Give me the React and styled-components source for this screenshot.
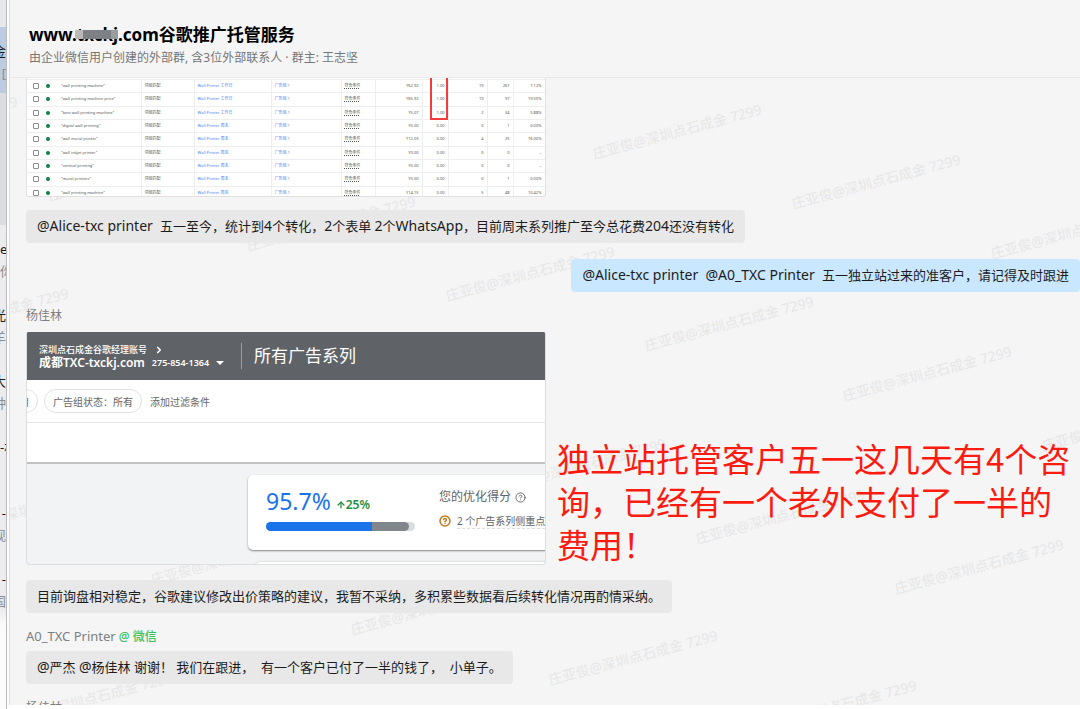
import React from 'react';
import styled, { createGlobalStyle } from 'styled-components';
import { ChevronRight, ArrowUp, CircleHelp } from 'lucide-react';

const Global = createGlobalStyle`
  * { box-sizing: border-box; }
  body {
    margin: 0;
    background: #fff;
    font-family: "Noto Sans", "Noto Sans CJK SC", sans-serif;
    color: #1a1a1a;
  }
  h1, h2, p { margin: 0; font-weight: 400; }
  button { font: inherit; color: inherit; background: none; border: 0; padding: 0; }
`;

const Screen = styled.div`
  display: flex;
  height: 100vh;
  overflow: hidden;
`;

const ChatList = styled.aside`
  flex: 0 0 7px;
  overflow: hidden;
  padding-top: 27px;
  border-right: 1px solid #b9bbbf;
  background: linear-gradient(#e6e8ec 0 166px, #ececee 166px 610px, #fbfbfb 625px);
`;

const ChatItem = styled.div`
  height: 66px;
  padding-top: 13px;
  display: flex;
  flex-direction: column;
  align-items: ${(p) => (p.$start ? 'flex-start' : 'flex-end')};
  white-space: nowrap;
  font-size: 13px;
  line-height: 22px;
  background: ${(p) => (p.$tone === 'active' ? '#bccbe0' : p.$tone === 'hover' ? '#dbdde1' : 'transparent')};
`;

const ItemPreview = styled.span`
  color: #8a8d92;
`;

const Panel = styled.main`
  position: relative;
  flex: 1;
  min-width: 0;
  display: flex;
  flex-direction: column;
  margin: 0 0 4px 2px;
  border-left: 1px solid #dcdde1;
  background: #f5f5f5;
  overflow: hidden;
`;

const Header = styled.header`
  position: relative;
  flex: none;
  height: 78px;
  padding: 22px 19px 0;
  border-bottom: 1px solid #e8e8e8;
  background: #f5f5f5;
`;

const Title = styled.h1`
  display: flex;
  font-size: 17px;
  line-height: 26px;
  font-weight: 700;
  color: #000;
`;

const Redacted = styled.span`
  position: relative;
  &::after {
    content: "";
    position: absolute;
    inset: 8px 0 9px -2px;
    background: linear-gradient(90deg, #bdb8b5 0 8px, #7d8186 8px 36px, #9a9da0 36px);
  }
`;

const Subtitle = styled.p`
  font-size: 12px;
  line-height: 20px;
  color: #757575;
`;

const Stream = styled.section`
  position: relative;
  flex: 1;
  min-height: 0;
  overflow: hidden;
  padding-left: 16px;
  display: flex;
  flex-direction: column;
  align-items: flex-start;
  > * { flex-shrink: 0; }
`;

const WatermarkLayer = styled.div`
  position: absolute;
  inset: 0;
  overflow: hidden;
  pointer-events: none;
`;

const Watermark = styled.span`
  position: absolute;
  white-space: nowrap;
  font-size: 14px;
  line-height: 16px;
  color: #e6e6e7;
  transform: rotate(-15deg);
  transform-origin: left bottom;
`;

const Shot = styled.figure`
  position: relative;
  margin: 0;
  width: 520px;
  height: 119px;
  padding-top: 1px;
  background: #fff;
  overflow: hidden;
  border-radius: 0 0 3px 3px;
  border: 1px solid #e0e0e0;
  border-top: 0;
`;

const Keywords = styled.table`
  width: 100%;
  height: 121px;
  table-layout: fixed;
  border-collapse: collapse;
  font-size: 4px;
  line-height: 6px;
  color: #555;
  td {
    padding: 0 3px;
    border: 1px solid #eeeeee;
    border-left: 0;
    white-space: nowrap;
    overflow: hidden;
  }
  td:first-child { padding-left: 6px; }
  a { color: #4285f4; text-decoration: none; }
  u { text-decoration: underline dotted; }
`;

const Num = styled.td`
  text-align: right;
`;

const KeywordCell = styled.label`
  display: flex;
  align-items: center;
  gap: 7px;
  input {
    appearance: none;
    width: 6px;
    height: 6px;
    margin: 0;
    border: 1px solid #8a8a8a;
    border-radius: 1px;
  }
`;

const Dot = styled.i`
  width: 4px;
  height: 4px;
  margin-right: 4px;
  border-radius: 50%;
  background: #0b8043;
`;

const RedMark = styled.span`
  position: absolute;
  left: 403px;
  top: -3px;
  width: 18px;
  height: 45px;
  border: 2px solid #f23c3c;
`;

const Bubble = styled.p`
  position: relative;
  min-height: 33px;
  padding: 6px 11px;
  margin: ${(p) => p.$margin};
  align-self: ${(p) => (p.$own ? 'flex-end' : 'flex-start')};
  border-radius: 4px;
  font-size: 13px;
  line-height: 21px;
  white-space: pre;
  color: #1c1c1c;
  background: ${(p) => (p.$own ? '#c9e7ff' : '#e8e8e8')};
`;

const Latin = styled.span`
  font-size: 14px;
  line-height: 14px;
`;

const Sender = styled.p`
  position: relative;
  font-size: 12px;
  line-height: 20px;
  color: #7c7f82;
`;

const SenderLatin = styled.span`
  font-size: 13px;
  line-height: 14px;
`;

const WeChat = styled.span`
  margin-left: 3px;
  font-weight: 500;
  color: #3cc15f;
`;

const ShotRow = styled.div`
  position: relative;
  width: 100%;
  margin-top: 6px;
  display: flex;
  align-items: flex-start;
  gap: 11px;
`;

const AdsShot = styled.figure`
  flex: 0 0 520px;
  height: 233px;
  margin: 0;
  border: 1px solid #dcdee1;
  border-top: 0;
  border-radius: 2px 2px 4px 4px;
  overflow: hidden;
  background: #f1f3f4;
`;

const AdsBar = styled.div`
  height: 48px;
  display: flex;
  align-items: center;
  padding-left: 12px;
  color: #fff;
  background: #5f6368;
`;

const Account = styled.div`
  padding-right: 17px;
  border-right: 1px solid #9a9da1;
`;

const AccountLine = styled.div`
  display: flex;
  align-items: center;
  gap: 7px;
  font-size: ${(p) => (p.$main ? '12px' : '9px')};
  font-weight: ${(p) => (p.$main ? 600 : 500)};
  line-height: 13px;
  small { font-size: 9px; }
`;

const Caret = styled.i`
  border: 4px solid transparent;
  border-top-color: #fff;
  border-bottom: 0;
`;

const AdsTitle = styled.h2`
  padding-left: 12px;
  font-size: 17px;
  line-height: 24px;
`;

const Filters = styled.div`
  height: 43px;
  display: flex;
  align-items: center;
  gap: 6px;
  border-bottom: 1px solid #e3e4e6;
  background: #fff;
  font-size: 10px;
  color: #666;
`;

const Chip = styled.button`
  flex: none;
  height: 24px;
  padding: 0 8px;
  margin-left: ${(p) => (p.$cut ? '-17px' : '0')};
  border: 1px solid #dfe1e4;
  border-radius: 12px;
`;

const AddFilter = styled.button`
  margin-left: 2px;
`;

const Blank = styled.div`
  height: 41px;
  border-bottom: 2px solid #c0c2c4;
  background: #fff;
`;

const ScoreCard = styled.div`
  height: 75px;
  margin: 11px -20px 0 221px;
  padding: 10px 18px;
  display: grid;
  grid-template-columns: 149px 1fr;
  column-gap: 24px;
  border-radius: 5px;
  background: #fff;
  box-shadow: 0 1px 2px rgba(0, 0, 0, 0.45);
`;

const Score = styled.div`
  display: flex;
  align-items: baseline;
  gap: 5px;
  font-size: 23px;
  line-height: 32px;
  color: #1a73e8;
`;

const Gain = styled.span`
  display: flex;
  align-items: center;
  font-size: 12px;
  font-weight: 600;
  line-height: 12px;
  color: #1e8e3e;
`;

const Track = styled.div`
  height: 9px;
  margin-top: 5px;
  border-radius: 5px;
  overflow: hidden;
  background: #dadce0;
`;

const Fill = styled.div`
  height: 9px;
  width: ${(p) => p.$width};
  border-radius: 0 5px 5px 0;
  background: linear-gradient(90deg, #1a73e8 0 74%, #80868b 74%);
`;

const Info = styled.div`
  display: flex;
  align-items: center;
  gap: ${(p) => (p.$small ? '6px' : '4px')};
  min-height: 24px;
  white-space: nowrap;
  font-size: ${(p) => (p.$small ? '10px' : '12px')};
  line-height: 24px;
  color: #5f6368;
  svg { flex: none; }
`;

const Dotted = styled.span`
  line-height: 14px;
  border-bottom: 1px dashed #ddd;
`;

const NextCard = styled.div`
  height: 20px;
  margin: 12px -20px 0 228px;
  border-radius: 5px;
  background: #fff;
  box-shadow: 0 0 2px rgba(0, 0, 0, 0.25);
`;

const Callout = styled.p`
  flex: 1;
  min-width: 0;
  padding: 105px 6px 0 0;
  font-family: "Noto Sans CJK SC", sans-serif;
  font-size: 33px;
  line-height: 43px;
  color: #fb1b10;
`;

const items = [
  ['金', '[', 'active'],
  ['', '', 'hover'],
  ['', '', 'hover'],
  ['ea', '你', '', true],
  ['光', '羊', ''],
  ['大', '种', ''],
  ['-村', '', '', true],
  ['-', '现', ''],
  ['-', '国', ''],
];

const rows = [
  ['"wall printing machine"', '工作日', '¥62.92', '1.00', '19', '267', '7.12%'],
  ['"wall printing machine price"', '工作日', '¥65.92', '1.00', '19', '97', '19.59%'],
  ['"best wall printing machine"', '工作日', '¥5.07', '1.00', '2', '34', '5.88%'],
  ['"digital wall printing"', '周末', '¥0.00', '0.00', '0', '1', '0.00%'],
  ['"wall mural printer"', '周末', '¥12.03', '0.00', '4', '25', '16.00%'],
  ['"wall inkjet printer"', '周末', '¥0.00', '0.00', '0', '0', '–'],
  ['"vertical printing"', '周末', '¥0.00', '0.00', '0', '0', '–'],
  ['"mural printers"', '周末', '¥0.00', '0.00', '0', '1', '0.00%'],
  ['"wall printing machine"', '周末', '¥14.15', '0.00', '5', '48', '10.42%'],
];

const columns = [114, 53, 77, 70, 34, 47, 26, 39, 26, 32];

const marks = [
  [592, 160], [791, 210], [990, 260],
  [-152, 152], [47, 202], [246, 252], [445, 302], [644, 352], [842, 402], [1041, 452],
  [-101, 344], [496, 494], [695, 545], [894, 595],
  [-49, 536], [150, 586], [350, 636], [548, 686], [747, 736],
  [3, 728],
];

export default function App() {
  return (
    <>
      <Global />
      <Screen>
        <ChatList>
          {items.map(([name, preview, tone, start], i) => (
            <ChatItem key={i} $tone={tone} $start={start}>
              <span>{name}</span>
              <ItemPreview>{preview}</ItemPreview>
            </ChatItem>
          ))}
        </ChatList>
        <Panel>
          <Header>
            <Title>www.<Redacted>txckj</Redacted>.com谷歌推广托管服务</Title>
            <Subtitle>由企业微信用户创建的外部群, 含3位外部联系人 · 群主: 王志坚</Subtitle>
          </Header>
          <Stream>
            <WatermarkLayer aria-hidden="true">
              {marks.map(([x, y]) => (
                <Watermark key={`${x}-${y}`} style={{ left: x - 7, top: y - 92 }}>
                  庄亚俊@深圳点石成金 7299
                </Watermark>
              ))}
            </WatermarkLayer>
            <Shot>
              <Keywords>
                <colgroup>
                  {columns.map((w, i) => <col key={i} style={{ width: w }} />)}
                </colgroup>
                <tbody>
                  {rows.map(([word, series, cost, conv, clicks, views, rate], i) => (
                    <tr key={i}>
                      <td>
                        <KeywordCell><input type="checkbox" /><Dot />{word}</KeywordCell>
                      </td>
                      <td>词组匹配</td>
                      <td><a href="#series">Wall Printer {series}</a></td>
                      <td><a href="#group">广告组 1</a></td>
                      <td><u>符合条件</u></td>
                      <Num>{cost}</Num>
                      <Num>{conv}</Num>
                      <Num>{clicks}</Num>
                      <Num>{views}</Num>
                      <Num>{rate}</Num>
                    </tr>
                  ))}
                </tbody>
              </Keywords>
              <RedMark />
            </Shot>
            <Bubble $margin="13px 0 16px"><Latin>@Alice-txc printer  </Latin>五一至今，统计到<Latin>4</Latin>个转化，<Latin>2</Latin>个表单 <Latin>2</Latin>个<Latin>WhatsApp</Latin>，目前周末系列推广至今总花费<Latin>204</Latin>还没有转化</Bubble>
            <Bubble $own $margin="0 0 14px"><Latin>@Alice-txc printer  @A0_TXC Printer  </Latin>五一独立站过来的准客户，请记得及时跟进</Bubble>
            <Sender>杨佳林</Sender>
            <ShotRow>
              <AdsShot>
                <AdsBar>
                  <Account>
                    <AccountLine>深圳点石成金谷歌经理账号 <ChevronRight size={10} strokeWidth={4} /></AccountLine>
                    <AccountLine $main>成都TXC-txckj.com <small>275-854-1364</small><Caret /></AccountLine>
                  </Account>
                  <AdsTitle>所有广告系列</AdsTitle>
                </AdsBar>
                <Filters>
                  <Chip $cut>用</Chip>
                  <Chip>广告组状态：所有</Chip>
                  <AddFilter>添加过滤条件</AddFilter>
                </Filters>
                <Blank />
                <ScoreCard>
                  <div>
                    <Score>95.7%<Gain><ArrowUp size={10} strokeWidth={3} />25%</Gain></Score>
                    <Track><Fill $width="96%" /></Track>
                  </div>
                  <div>
                    <Info>您的优化得分 <CircleHelp size={11} /></Info>
                    <Info $small><CircleHelp size={12} color="#c27a1f" strokeWidth={3} /><Dotted>2 个广告系列侧重点</Dotted></Info>
                  </div>
                </ScoreCard>
                <NextCard />
              </AdsShot>
              <Callout>独立站托管客户五一这几天有4个咨询，已经有一个老外支付了一半的费用！</Callout>
            </ShotRow>
            <Bubble $margin="14px 0 14px">目前询盘相对稳定，谷歌建议修改出价策略的建议，我暂不采纳，多积累些数据看后续转化情况再酌情采纳。</Bubble>
            <Sender><SenderLatin>A0_TXC Printer</SenderLatin><WeChat>@ 微信</WeChat></Sender>
            <Bubble $margin="4px 0 14px"><Latin>@</Latin>严杰 <Latin>@</Latin>杨佳林 谢谢！ 我们在跟进，  有一个客户已付了一半的钱了，  小单子。</Bubble>
            <Sender>杨佳林</Sender>
          </Stream>
        </Panel>
      </Screen>
    </>
  );
}
